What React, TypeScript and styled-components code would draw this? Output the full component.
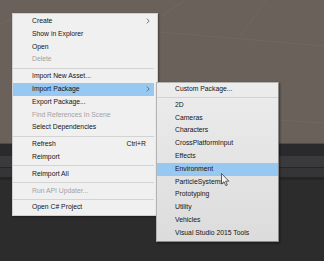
import React from 'react';
import styled, { createGlobalStyle } from 'styled-components';

const GlobalStyle = createGlobalStyle`
  html, body {
    margin: 0;
    padding: 0;
    background: #2b2b2b;
  }
`;

const Screen = styled.div`
  position: relative;
  width: 324px;
  height: 261px;
  overflow: hidden;
  display: flex;
  flex-direction: column;
  font-family: 'Liberation Sans', Arial, sans-serif;
`;

const SceneView = styled.div`
  height: 143px;
  flex: none;
  background: #6a615a;
  svg {
    display: block;
  }
`;

const Panel = styled.div`
  flex: 1;
  display: flex;
  flex-direction: column;
  background: #2c2c2c;
`;

const Band = styled.div<{ $h: number; $bg: string; $line?: string }>`
  height: ${(p) => p.$h}px;
  flex: none;
  background: ${(p) => p.$bg};
  border-top: 1px solid ${(p) => p.$line ?? 'transparent'};
`;

const Menu = styled.div`
  position: absolute;
  left: 12px;
  top: 13px;
  width: 146px;
  box-sizing: border-box;
  padding: 1px 3px 1px 0;
  background: #f0f0f0;
  border: 1px solid #cfcfcf;
  box-shadow: 1px 1px 2px rgba(0, 0, 0, 0.35);
  display: flex;
  flex-direction: column;
`;

const SubMenu = styled.div`
  position: absolute;
  left: 156px;
  top: 82px;
  width: 123px;
  box-sizing: border-box;
  padding: 0 0 1px;
  background: linear-gradient(#ececec, #dcdcdc);
  border: 1px solid #b4b4b4;
  border-right-color: #8a8a8a;
  border-bottom-color: #8a8a8a;
  box-shadow: 1px 1px 2px rgba(0, 0, 0, 0.45);
  display: flex;
  flex-direction: column;
`;

const Row = styled.div<{ $active?: boolean; $disabled?: boolean; $indent: number }>`
  height: 12.8px;
  line-height: 12.8px;
  display: flex;
  align-items: center;
  padding: 0 4px 0 ${(p) => p.$indent}px;
  font-size: 6.8px;
  white-space: nowrap;
  color: ${(p) => (p.$disabled ? '#a3a3a3' : '#141414')};
  background: ${(p) => (p.$active ? '#97c8f1' : 'transparent')};
`;

const Label = styled.span`
  flex: 1;
`;

const Shortcut = styled.span`
  padding-right: 4px;
`;

const Separator = styled.div<{ $h: number }>`
  height: ${(p) => p.$h}px;
  display: flex;
  align-items: center;
  &::after {
    content: '';
    flex: 1;
    height: 1px;
    background: #d3d3d3;
  }
`;

const Cursor = styled.svg`
  position: absolute;
  left: 221px;
  top: 173px;
`;

const Chevron = () => (
  <svg width="4" height="6" viewBox="0 0 4 6">
    <path d="M0.8 0.6 L3.2 3 L0.8 5.4" fill="none" stroke="#555" strokeWidth="0.8" />
  </svg>
);

type Item = { label?: string; sep?: boolean; disabled?: boolean; sub?: boolean; shortcut?: string; active?: boolean };

const mainItems: Item[] = [
  { label: 'Create', sub: true },
  { label: 'Show in Explorer' },
  { label: 'Open' },
  { label: 'Delete', disabled: true },
  { sep: true },
  { label: 'Import New Asset...' },
  { label: 'Import Package', sub: true, active: true },
  { label: 'Export Package...' },
  { label: 'Find References In Scene', disabled: true },
  { label: 'Select Dependencies' },
  { sep: true },
  { label: 'Refresh', shortcut: 'Ctrl+R' },
  { label: 'Reimport' },
  { sep: true },
  { label: 'Reimport All' },
  { sep: true },
  { label: 'Run API Updater...', disabled: true },
  { sep: true },
  { label: 'Open C# Project' },
];

const packages: Item[] = [
  { label: 'Custom Package...' },
  { sep: true },
  { label: '2D' },
  { label: 'Cameras' },
  { label: 'Characters' },
  { label: 'CrossPlatformInput' },
  { label: 'Effects' },
  { label: 'Environment', active: true },
  { label: 'ParticleSystems' },
  { label: 'Prototyping' },
  { label: 'Utility' },
  { label: 'Vehicles' },
  { label: 'Visual Studio 2015 Tools' },
];

function renderItems(items: Item[], indent: number, sepH: number) {
  return items.map((it, i) =>
    it.sep ? (
      <Separator key={i} $h={sepH} />
    ) : (
      <Row key={i} $indent={indent} $active={it.active} $disabled={it.disabled}>
        <Label>{it.label}</Label>
        {it.shortcut && <Shortcut>{it.shortcut}</Shortcut>}
        {it.sub && <Chevron />}
      </Row>
    )
  );
}

export default function App() {
  return (
    <>
      <GlobalStyle />
      <Screen>
        <SceneView>
          <svg width="324" height="143" viewBox="0 0 324 143">
            <g stroke="#736a63" strokeWidth="0.8" fill="none">
              <line x1="185" y1="0" x2="150" y2="24" />
              <line x1="267" y1="0" x2="240" y2="36" />
              <line x1="160" y1="32" x2="324" y2="46" />
              <line x1="280" y1="120" x2="324" y2="123" />
              <line x1="0" y1="24" x2="14" y2="18" />
            </g>
          </svg>
        </SceneView>
        <Panel>
          <Band $h={12} $bg="#2a2a2c" $line="#4e4a47" />
          <Band $h={10} $bg="#3a3a3c" />
          <Band $h={9} $bg="#353537" $line="#262626" />
          <Band $h={2} $bg="#252525" />
        </Panel>

        <Menu>{renderItems(mainItems, 19, 4)}</Menu>
        <SubMenu>{renderItems(packages, 18, 3)}</SubMenu>

        <Cursor width="9" height="14" viewBox="0 0 9 14">
          <path
            d="M0.5 0.5 L0.5 11 L3 8.7 L4.8 12.6 L6.3 12 L4.6 8.2 L7.8 8.2 Z"
            fill="#f4f4f4"
            stroke="#3a3a3a"
            strokeWidth="0.8"
            strokeLinejoin="round"
          />
        </Cursor>
      </Screen>
    </>
  );
}
